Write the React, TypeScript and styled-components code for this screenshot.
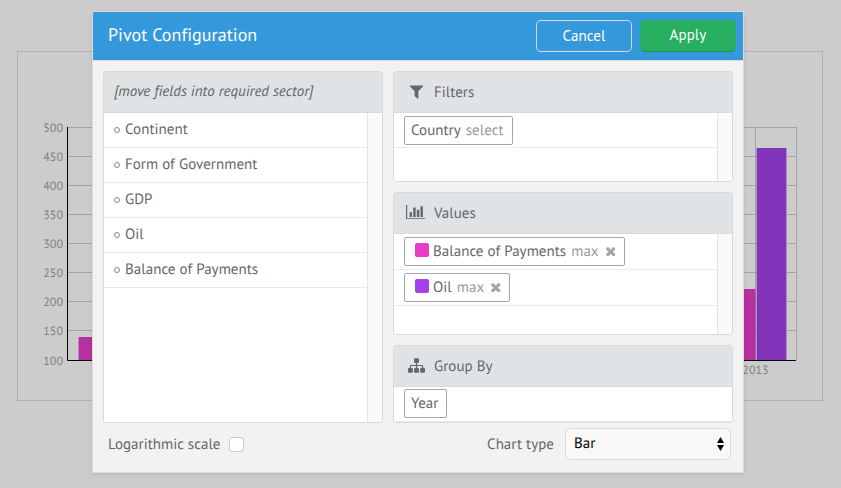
import React from 'react';
import styled, { createGlobalStyle } from 'styled-components';

const GlobalStyle = createGlobalStyle`
  * { box-sizing: border-box; }
  body { margin: 0; background: #ccc; font-family: "PT Sans", "Open Sans", sans-serif; font-size: 15px; letter-spacing: 0.03px; color: #666; overflow: hidden; text-rendering: geometricPrecision; }
`;

const Page = styled.div`
  position: relative;
  width: 841px;
  height: 488px;
  padding: 51px 18px 0 17px;
  background: #ccc;
`;

const ChartFrame = styled.div`
  height: 350px;
  border: 1px solid #b0b0b0;
`;

const ChartDrawing = styled.svg`
  display: block;
  width: 804px;
  height: 348px;
  font-family: "PT Sans", "Open Sans", sans-serif;
  font-size: 12px;
  fill: #808080;
`;

const Dialog = styled.section`
  position: absolute;
  left: 92px;
  top: 11px;
  width: 652px;
  height: 462px;
  display: flex;
  flex-direction: column;
  border: 1px solid #dadada;
  background: #f2f2f2;
  box-shadow: 0 2px 4px rgba(0, 0, 0, 0.09);
`;

const Toolbar = styled.header`
  display: flex;
  align-items: center;
  gap: 8px;
  height: 49px;
  flex: none;
  padding: 0 7px 1px 15px;
  border-bottom: 1px solid #dadada;
  background: #3498db;
  color: #fff;
`;

const Title = styled.h1`
  flex: 1;
  margin: 0;
  padding-bottom: 1px;
  font-size: 18px;
  font-weight: 400;
  line-height: 24px;
  letter-spacing: 0.04px;
`;

const Button = styled.button<{ $filled?: boolean }>`
  width: 96px;
  height: 32px;
  padding: 0 0 ${p => (p.$filled ? 3 : 1)}px;
  border: 1px solid ${p => (p.$filled ? '#27ae60' : '#cfdfe9')};
  border-bottom-color: ${p => (p.$filled ? '#219150' : '#cfdfe9')};
  border-radius: 5px;
  background: ${p => (p.$filled ? '#27ae60' : 'transparent')};
  color: #fff;
  font: inherit;
  letter-spacing: 0.1px;
`;

const Body = styled.div`
  display: grid;
  grid-template-columns: 280px 340px;
  gap: 10px;
  height: 362px;
  padding: 10px 10px 0;
`;

const Sectors = styled.div`
  display: flex;
  flex-direction: column;
  gap: 10px;
`;

const Panel = styled.div<{ $height: number }>`
  display: flex;
  flex-direction: column;
  height: ${p => p.$height}px;
  border: 1px solid #dadada;
  border-radius: 3px;
  background: #fff;
  overflow: hidden;
`;

const PanelHeader = styled.div`
  display: flex;
  align-items: center;
  flex: none;
  height: 41px;
  border-bottom: 1px solid #dadada;
  background: #dfe3e6;
`;

const Hint = styled.em`
  padding: 0 0 1px 10px;
  letter-spacing: -0.02px;
`;

const IconSlot = styled.span`
  display: flex;
  align-items: center;
  justify-content: center;
  width: 20px;
  margin: 0 8px 2px 12px;
`;

const Icon = styled.svg`
  display: block;
  fill: #666;
`;

const PanelContent = styled.div<{ $track?: boolean }>`
  flex: 1;
  min-height: 0;
  background: #fff;
  ${p => p.$track && `
    padding-right: 15px;
    background: linear-gradient(to left, #fafafa 14px, #e4e4e4 14px, #e4e4e4 15px, #fff 15px);
  `}
`;

const FieldRow = styled.div`
  display: flex;
  align-items: center;
  height: 35px;
  padding: 0 0 1px 10px;
  border-bottom: 1px solid #ebebeb;
  background: #fff;
`;

const Bullet = styled.span`
  width: 6px;
  height: 6px;
  margin: 0 5px 0 0;
  border: 1px solid #6d8cab;
  border-radius: 50%;
`;

const ChipRow = styled.div<{ $height: number; $offset?: number }>`
  height: ${p => p.$height}px;
  padding: ${p => p.$offset ?? 3}px 10px 0;
  border-bottom: 1px solid #ebebeb;
`;

const Chip = styled.div<{ $width: number }>`
  display: flex;
  align-items: center;
  width: ${p => p.$width}px;
  height: 29px;
  padding: 0 0 1px 6px;
  border: 1px solid #a6a6a6;
  border-radius: 2px;
  background: #fff;
  white-space: nowrap;
`;

const Swatch = styled.span<{ $color: string }>`
  width: 14px;
  height: 14px;
  margin: 0 4px 2px 4px;
  border-radius: 2px;
  background: ${p => p.$color};
`;

const Operation = styled.span`
  margin-left: 5px;
  color: #999;
`;

const Remove = styled(Icon)`
  margin: 1px 0 0 7px;
  fill: #a6a6a6;
`;

const Footer = styled.footer`
  display: flex;
  align-items: center;
  height: 40px;
  padding: 0 12px 0 15px;
  margin-top: 1px;
`;

const Label = styled.span``;

const Checkbox = styled.span`
  width: 15px;
  height: 15px;
  margin-left: 9px;
  margin-right: auto;
  border: 1px solid #ccc;
  border-radius: 3px;
  background: #fff;
`;

const Select = styled.div`
  display: flex;
  align-items: center;
  justify-content: space-between;
  width: 166px;
  height: 32px;
  margin-left: 11px;
  padding: 0 6px 1px 8px;
  border: 1px solid #dadada;
  border-radius: 5px;
  background: #f8f8f8;
  color: #000;
`;

const Arrows = styled.svg`
  display: block;
  margin-top: 1px;
`;

const fields = ['Continent', 'Form of Government', 'GDP', 'Oil', 'Balance of Payments'];

const paths = {
  filter: 'M1595 295q17 41-14 70l-493 493v742q0 42-39 59-13 5-25 5-27 0-45-19l-256-256q-19-19-19-45v-486l-493-493q-31-29-14-70 17-39 59-39h1280q42 0 59 39z',
  bars: 'M640 768v512h-256v-512h256zM1024 256v1024h-256v-1024h256zM2048 1408v128h-2048v-1536h128v1408h1920zM1408 512v768h-256v-768h256zM1792 128v1152h-256v-1152h256z',
  tree: 'M1792 1248v320q0 40-28 68t-68 28h-320q-40 0-68-28t-28-68v-320q0-40 28-68t68-28h96v-192h-512v192h96q40 0 68 28t28 68v320q0 40-28 68t-68 28h-320q-40 0-68-28t-28-68v-320q0-40 28-68t68-28h96v-192h-512v192h96q40 0 68 28t28 68v320q0 40-28 68t-68 28h-320q-40 0-68-28t-28-68v-320q0-40 28-68t68-28h96v-192q0-52 38-90t90-38h512v-192h-96q-40 0-68-28t-28-68v-320q0-40 28-68t68-28h320q40 0 68 28t28 68v320q0 40-28 68t-68 28h-96v192h512q52 0 90 38t38 90v192h96q40 0 68 28t28 68z',
  times: 'M1490 1322q0 40-28 68l-136 136q-28 28-68 28t-68-28l-294-294-294 294q-28 28-68 28t-68-28l-136-136q-28-28-28-68t28-68l294-294-294-294q-28-28-28-68t28-68l136-136q28-28 68-28t68 28l294 294 294-294q28-28 68-28t68 28l136 136q28 28 28 68t-28 68l-294 294 294 294q28 28 28 68z',
};

const levels = [500, 450, 400, 350, 300, 250, 200, 150, 100];

function Chart() {
  return (
    <ChartDrawing viewBox="18 52 804 348">
      {levels.map((level, i) => {
        const y = i === 8 ? 360.5 : 127.5 + i * 29;
        return (
          <g key={level}>
            {i < 8 && <path d={`M68 ${y}H797`} stroke="#a3a3a3" />}
            <text x="63" y={y + 4.8} textAnchor="end">{level}</text>
          </g>
        );
      })}
      <path d="M755.5 127V360M796.5 127V360" stroke="#a3a3a3" />
      <path fill="#b7309f" d="M78.5 337H110V360H78.5ZM720 289H755.5V360H720Z" />
      <path fill="#8235bb" d="M756.5 148H786.5V360H756.5Z" />
      <path d="M756.5 148V360M786.5 148V360M78.5 337V360" stroke="#b395cb" strokeOpacity="0.6" />
      <path d="M67.5 127V360.5H796" fill="none" stroke="#000" />
      <text x="755.5" y="374" textAnchor="middle">2013</text>
    </ChartDrawing>
  );
}

function ValueChip({ name, color, width }: { name: string; color: string; width: number }) {
  return (
    <ChipRow $height={36}>
      <Chip $width={width}>
        <Swatch $color={color} />
        {name}
        <Operation>max</Operation>
        <Remove width="9.5" height="9.5" viewBox="302 366 1188 1188"><path d={paths.times} /></Remove>
      </Chip>
    </ChipRow>
  );
}

export default function App() {
  return (
    <Page>
      <GlobalStyle />
      <ChartFrame><Chart /></ChartFrame>
      <Dialog>
        <Toolbar>
          <Title>Pivot Configuration</Title>
          <Button>Cancel</Button>
          <Button $filled>Apply</Button>
        </Toolbar>
        <Body>
          <Panel $height={352}>
            <PanelHeader><Hint>[move fields into required sector]</Hint></PanelHeader>
            <PanelContent $track>
              {fields.map(field => <FieldRow key={field}><Bullet />{field}</FieldRow>)}
            </PanelContent>
          </Panel>
          <Sectors>
            <Panel $height={111}>
              <PanelHeader>
                <IconSlot><Icon width="17" height="17" viewBox="0 0 1792 1792"><path d={paths.filter} /></Icon></IconSlot>
                Filters
              </PanelHeader>
              <PanelContent $track>
                <ChipRow $height={35}><Chip $width={109}>Country<Operation>select</Operation></Chip></ChipRow>
              </PanelContent>
            </Panel>
            <Panel $height={143}>
              <PanelHeader>
                <IconSlot><Icon width="19.3" height="14.5" viewBox="0 0 2048 1536"><path d={paths.bars} /></Icon></IconSlot>
                Values
              </PanelHeader>
              <PanelContent $track>
                <ValueChip name="Balance of Payments" color="#e63cc7" width={221} />
                <ValueChip name="Oil" color="#a340ea" width={106} />
              </PanelContent>
            </Panel>
            <Panel $height={78}>
              <PanelHeader>
                <IconSlot><Icon width="17" height="17" viewBox="0 0 1792 1792"><path d={paths.tree} /></Icon></IconSlot>
                Group By
              </PanelHeader>
              <PanelContent>
                <ChipRow $height={35} $offset={2}><Chip $width={43}>Year</Chip></ChipRow>
              </PanelContent>
            </Panel>
          </Sectors>
        </Body>
        <Footer>
          <Label>Logarithmic scale</Label>
          <Checkbox />
          <Label>Chart type</Label>
          <Select>
            Bar
            <Arrows width="7" height="14" viewBox="0 0 7 14"><path d="M3.5 0L7 6H0ZM0 8H7L3.5 14Z" /></Arrows>
          </Select>
        </Footer>
      </Dialog>
    </Page>
  );
}
